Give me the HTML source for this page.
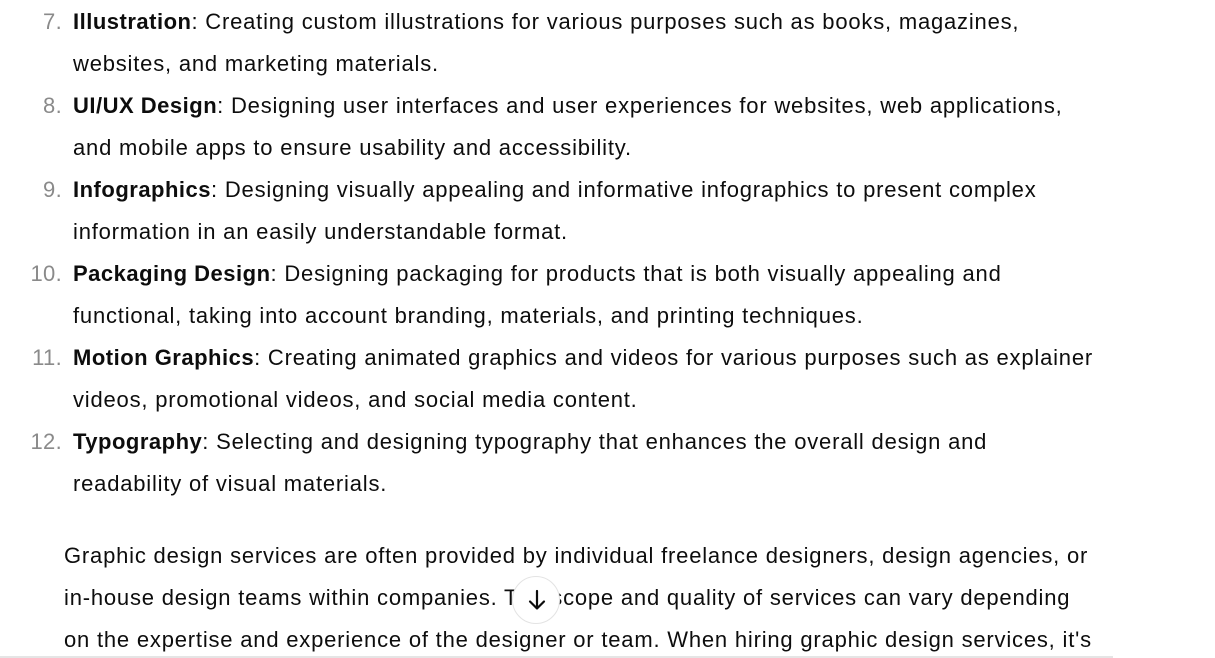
<!DOCTYPE html>
<html><head><meta charset="utf-8"><style>
html,body{margin:0;padding:0;background:#fff;width:1215px;height:658px;overflow:hidden}
body{font-family:"Liberation Sans",sans-serif;font-size:22px;letter-spacing:0.8px;color:#0d0d0d;position:relative}
.l{position:absolute;white-space:nowrap;line-height:42px;height:42px}
.n{position:absolute;width:62px;text-align:right;color:#8a8a8a;left:0;line-height:42px;white-space:nowrap;letter-spacing:0.3px}
b{font-weight:bold;letter-spacing:0.5px}
.btn{position:absolute;left:512px;top:576px;width:48px;height:48px;border-radius:50%;border:1px solid #e3e3e3;background:#fff;box-sizing:border-box}
.bar{position:absolute;left:0;top:656px;width:1113px;height:2px;background:#e5e5e5}
</style></head><body>
<div class="n" style="top:1px">7.</div>
<div class="l" style="left:73px;top:1px"><b>Illustration</b>: Creating custom illustrations for various purposes such as books, magazines,</div>
<div class="l" style="left:73px;top:43px">websites, and marketing materials.</div>
<div class="n" style="top:85px">8.</div>
<div class="l" style="left:73px;top:85px"><b>UI/UX Design</b>: Designing user interfaces and user experiences for websites, web applications,</div>
<div class="l" style="left:73px;top:127px">and mobile apps to ensure usability and accessibility.</div>
<div class="n" style="top:169px">9.</div>
<div class="l" style="left:73px;top:169px"><b>Infographics</b>: Designing visually appealing and informative infographics to present complex</div>
<div class="l" style="left:73px;top:211px">information in an easily understandable format.</div>
<div class="n" style="top:253px">10.</div>
<div class="l" style="left:73px;top:253px"><b>Packaging Design</b>: Designing packaging for products that is both visually appealing and</div>
<div class="l" style="left:73px;top:295px">functional, taking into account branding, materials, and printing techniques.</div>
<div class="n" style="top:337px">11.</div>
<div class="l" style="left:73px;top:337px"><b>Motion Graphics</b>: Creating animated graphics and videos for various purposes such as explainer</div>
<div class="l" style="left:73px;top:379px">videos, promotional videos, and social media content.</div>
<div class="n" style="top:421px">12.</div>
<div class="l" style="left:73px;top:421px"><b>Typography</b>: Selecting and designing typography that enhances the overall design and</div>
<div class="l" style="left:73px;top:463px">readability of visual materials.</div>
<div class="l" style="left:64px;top:535px">Graphic design services are often provided by individual freelance designers, design agencies, or</div>
<div class="l" style="left:64px;top:577px">in-house design teams within companies. The scope and quality of services can vary depending</div>
<div class="l" style="left:64px;top:619px">on the expertise and experience of the designer or team. When hiring graphic design services, it's</div>
<div class="btn"><svg width="46" height="46" viewBox="0 0 46 46"><path d="M24 14v17M17 24.5l7 7 7-7" fill="none" stroke="#0d0d0d" stroke-width="2.2" stroke-linecap="round" stroke-linejoin="round"/></svg></div>
<div class="bar"></div>
</body></html>
